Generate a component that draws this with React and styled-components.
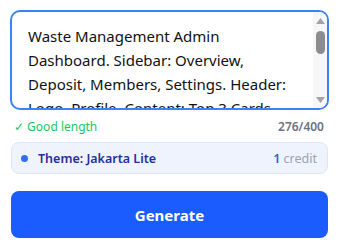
import styled, { createGlobalStyle } from "styled-components";

const Global = createGlobalStyle`
  body {
    margin: 0;
    background: #ffffff;
    font-family: "Noto Sans", "Open Sans", sans-serif;
  }
`;

const PROMPT =
  "Waste Management Admin Dashboard. Sidebar: Overview, Deposit, Members, Settings. Header: Logo, Profile, Content: Top 3 Cards (Total Waste, Members, Balance), line chart of monthly deposits, table of recent transactions with name, type, weight, date and status.";

export default function App() {
  return (
    <>
      <Global />
      <Panel>
        <PromptWrap>
          <Prompt defaultValue={PROMPT} />
          <Scrollbar>
            <svg width="9" height="6" viewBox="0 0 9 6">
              <path d="M4.5 0 L9 6 L0 6 Z" fill="#a3a3a3" />
            </svg>
            <Thumb />
            <BottomArrow width="9" height="6" viewBox="0 0 9 6">
              <path d="M0 0 L9 0 L4.5 6 Z" fill="#a3a3a3" />
            </BottomArrow>
          </Scrollbar>
        </PromptWrap>
        <StatusRow>
          <Good>✓ Good length</Good>
          <Count>276/400</Count>
        </StatusRow>
        <ThemeBox>
          <Dot />
          <ThemeName>Theme: Jakarta Lite</ThemeName>
          <Credit>
            <strong>1</strong> credit
          </Credit>
        </ThemeBox>
        <GenerateButton>Generate</GenerateButton>
      </Panel>
    </>
  );
}

const Panel = styled.div`
  width: 319px;
  padding: 10px 0 0 10px;
  display: flex;
  flex-direction: column;
`;

const PromptWrap = styled.div`
  position: relative;
  height: 100px;
`;

const Prompt = styled.textarea`
  box-sizing: border-box;
  display: block;
  width: 100%;
  height: 100px;
  border: 2px solid #3b82f6;
  border-radius: 10px;
  padding: 12px 30px 10px 16px;
  font-family: "Noto Sans", sans-serif;
  font-size: 15px;
  line-height: 24px;
  color: #111111;
  resize: none;
  outline: none;
  overflow: hidden;
`;

const Scrollbar = styled.div`
  position: absolute;
  top: 2px;
  right: 2px;
  bottom: 2px;
  width: 14px;
  background: #f7f7f7;
  border-radius: 0 8px 8px 0;
  display: flex;
  flex-direction: column;
  align-items: center;
  padding: 6px 0 5px;
  box-sizing: border-box;
`;

const Thumb = styled.div`
  width: 9px;
  height: 23px;
  margin-top: 7px;
  border-radius: 5px;
  background: #8c8c8c;
`;

const BottomArrow = styled.svg`
  margin-top: auto;
`;

const StatusRow = styled.div`
  display: flex;
  justify-content: space-between;
  align-items: center;
  padding: 0 5px 0 4px;
  margin-top: 8px;
  height: 16px;
  font-size: 12px;
`;

const Good = styled.span`
  color: #22c55e;
`;

const Count = styled.span`
  color: #6b7280;
  font-weight: 600;
`;

const ThemeBox = styled.div`
  box-sizing: border-box;
  margin: 8px 1px 0 1px;
  height: 32px;
  display: flex;
  align-items: center;
  padding: 0 10px 0 9px;
  background: #eef3fe;
  border: 1px solid #dce6fb;
  border-radius: 8px;
  font-size: 12.5px;
`;

const Dot = styled.span`
  width: 7px;
  height: 7px;
  border-radius: 50%;
  background: #2f6ff0;
  margin-right: 10px;
`;

const ThemeName = styled.span`
  flex: 1;
  color: #26309a;
  font-weight: 600;
`;

const Credit = styled.span`
  color: #9ca3af;
  strong {
    color: #3b5bdb;
    font-weight: 600;
  }
`;

const GenerateButton = styled.button`
  margin: 17px 1px 0 1px;
  height: 47px;
  border: none;
  border-radius: 8px;
  background: #1b5cff;
  color: #ffffff;
  font-family: "Noto Sans", sans-serif;
  font-size: 15px;
  font-weight: 700;
  cursor: pointer;
`;
